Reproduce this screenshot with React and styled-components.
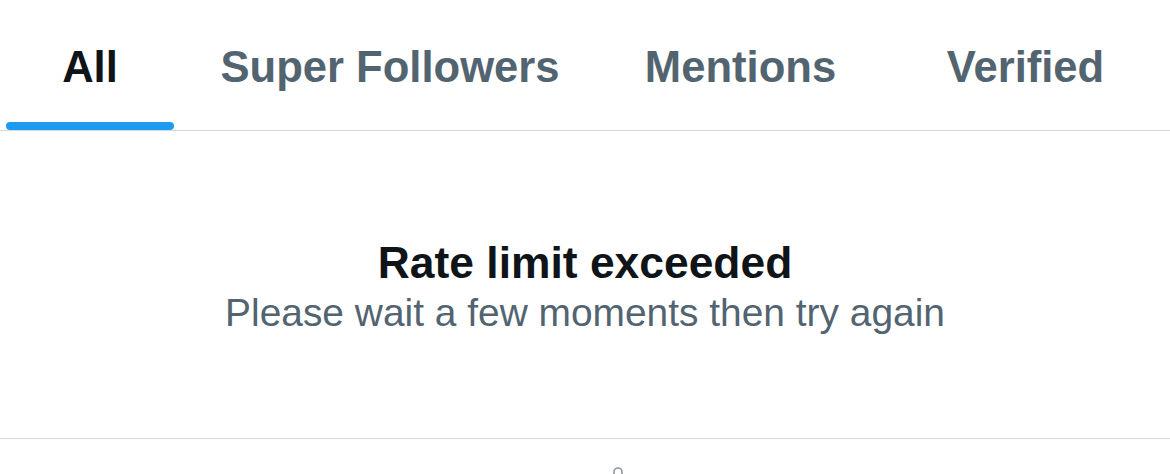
import React from "react";
import styled, { createGlobalStyle } from "styled-components";

const Global = createGlobalStyle`
  html, body { margin: 0; padding: 0; background: #ffffff; }
  body { font-family: "Liberation Sans", Arial, sans-serif; overflow: hidden; }
`;

const Page = styled.div`
  width: 1170px;
  height: 474px;
  background: #ffffff;
  display: flex;
  flex-direction: column;
  overflow: hidden;
`;

const TabBar = styled.nav`
  flex: none;
  display: flex;
  height: 131px;
  box-sizing: border-box;
  border-bottom: 1px solid #d3d8db;
`;

const Tab = styled.div`
  width: ${(p) => p.$w}px;
  flex: none;
  display: flex;
  flex-direction: column;
  align-items: center;
  justify-content: space-between;
  padding-top: 41px;
  box-sizing: border-box;
  height: 130px;
`;

const TabLabel = styled.span`
  font-size: 43.6px;
  line-height: 52px;
  font-weight: 700;
  color: ${(p) => (p.$active ? "#0f1419" : "#536471")};
  white-space: nowrap;
`;

const Indicator = styled.div`
  width: 168px;
  height: 8px;
  border-radius: 4px;
  background: ${(p) => (p.$active ? "#1d9bf0" : "transparent")};
`;

const Message = styled.section`
  flex: none;
  height: 308px;
  box-sizing: border-box;
  border-bottom: 1px solid #d3d8db;
  padding-top: 106px;
  display: flex;
  flex-direction: column;
  align-items: center;
`;

const Title = styled.h2`
  margin: 0;
  font-size: 44.4px;
  line-height: 52px;
  font-weight: 700;
  color: #0f1419;
`;

const Subtitle = styled.p`
  margin: 0;
  font-size: 38.9px;
  line-height: 48px;
  font-weight: 400;
  color: #536471;
`;

const Footer = styled.div`
  flex: none;
  display: flex;
  justify-content: center;
  padding-top: 27px;
  padding-left: 66px;
`;

const tabs = [
  { label: "All", w: 180, active: true },
  { label: "Super Followers", w: 420 },
  { label: "Mentions", w: 281 },
  { label: "Verified", w: 289 },
];

export default function App() {
  return (
    <Page>
      <Global />
      <TabBar>
        {tabs.map((t) => (
          <Tab key={t.label} $w={t.w}>
            <TabLabel $active={t.active}>{t.label}</TabLabel>
            <Indicator $active={t.active} />
          </Tab>
        ))}
      </TabBar>
      <Message>
        <Title>Rate limit exceeded</Title>
        <Subtitle>Please wait a few moments then try again</Subtitle>
      </Message>
      <Footer>
        <svg width="12" height="12" viewBox="0 0 12 12" aria-hidden="true">
          <path
            d="M2 12 V6 a4 4 0 0 1 8 0 V12"
            fill="none"
            stroke="#8b98a5"
            strokeWidth="1.6"
          />
        </svg>
      </Footer>
    </Page>
  );
}
